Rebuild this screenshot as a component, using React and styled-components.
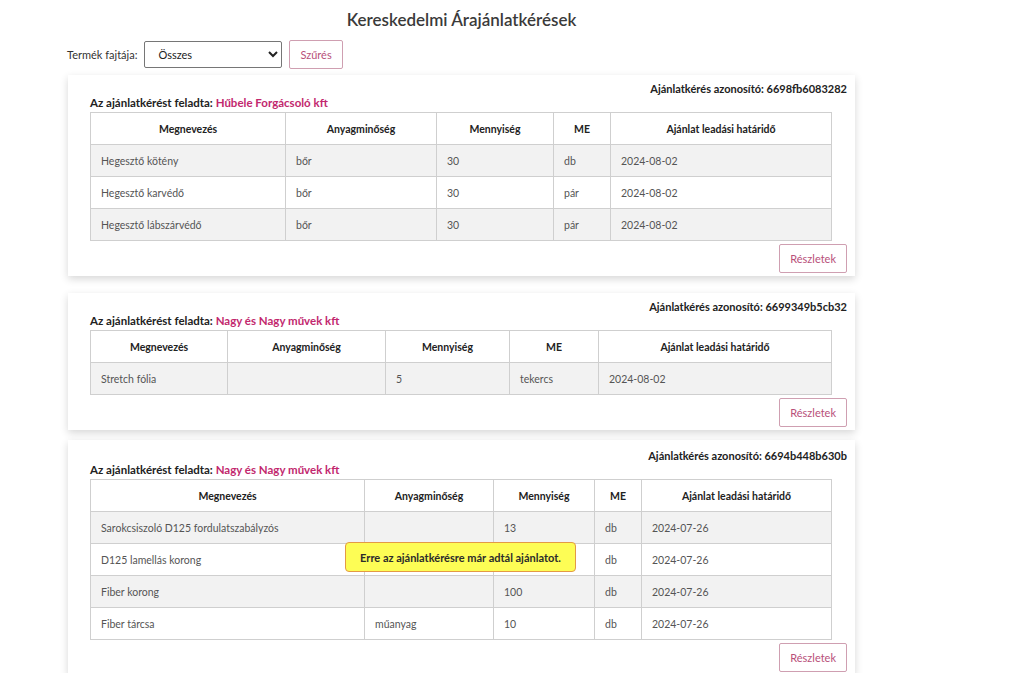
import React from "react";
import styled, { createGlobalStyle } from "styled-components";

const GlobalStyle = createGlobalStyle`
  body {
    margin: 0;
    background: #ffffff;
    font-family: Lato, "Open Sans", sans-serif;
    color: #444;
  }
`;

const Page = styled.div`
  width: 787px;
  margin-left: 68px;
  padding-top: 9px;
`;

const Title = styled.h1`
  margin: 0;
  text-align: center;
  font-size: 17px;
  font-weight: 600;
  color: #3a3a3a;
  line-height: 22px;
`;

const FilterRow = styled.div`
  display: flex;
  align-items: center;
  margin-top: 9px;
  margin-left: -1px;
  gap: 7px;
  font-size: 11px;
  color: #333;
`;

const Label = styled.label`
  margin-right: 0;
`;

const Select = styled.select`
  width: 138px;
  height: 27px;
  border: 1px solid #767676;
  border-radius: 2px;
  background: #fff;
  font-family: inherit;
  font-size: 11px;
  padding-left: 9px;
  color: #222;
`;

const OutlineButton = styled.button`
  height: ${(p) => p.$h || 29}px;
  padding: 0 ${(p) => p.$px || 10}px;
  background: #fff;
  border: 1px solid #cf9fb1;
  border-radius: 2px;
  color: #b8507a;
  font-family: inherit;
  font-size: 11px;
  cursor: pointer;
`;

const Card = styled.div`
  position: relative;
  margin-top: ${(p) => p.$mt}px;
  background: #fff;
  box-shadow: 0 3px 8px rgba(0, 0, 0, 0.16);
  padding: ${(p) => p.$pt || 7}px 8px 3px 8px;
`;

const RequestId = styled.div`
  text-align: right;
  font-size: 11px;
  font-weight: 700;
  color: #222;
  line-height: 14px;
`;

const Sender = styled.div`
  margin-left: 14px;
  font-size: 11.5px;
  font-weight: 700;
  color: #222;
  line-height: 14px;
  span {
    color: #c2286e;
  }
`;

const TableWrap = styled.div`
  position: relative;
  margin: 2px 16px 0 14px;
`;

const Table = styled.table`
  width: 741px;
  border-collapse: collapse;
  table-layout: fixed;
  font-size: 10.5px;
  th,
  td {
    border: 1px solid #cfcfcf;
    height: 31px;
    padding: 0 10px;
  }
  th {
    font-weight: 700;
    color: #222;
    text-align: center;
    background: #fff;
  }
  td {
    color: #555;
    text-align: left;
  }
  tbody tr:nth-child(odd) td {
    background: #f2f2f2;
  }
`;

const Footer = styled.div`
  display: flex;
  justify-content: flex-end;
  margin-top: 3px;
`;

const Tooltip = styled.div`
  position: absolute;
  left: 255px;
  top: 63px;
  width: 231px;
  height: 30px;
  box-sizing: border-box;
  display: flex;
  align-items: center;
  justify-content: center;
  background: #fdfd55;
  border: 1px solid #e39a45;
  border-radius: 4px;
  font-size: 11px;
  font-weight: 700;
  color: #2b2b2b;
`;

const headers = [
  "Megnevezés",
  "Anyagminőség",
  "Mennyiség",
  "ME",
  "Ajánlat leadási határidő",
];

const requests = [
  {
    id: "6698fb6083282",
    sender: "Hűbele Forgácsoló kft",
    mt: 6,
    cols: [195, 151, 117, 57, 221],
    rows: [
      ["Hegesztő kötény", "bőr", "30", "db", "2024-08-02"],
      ["Hegesztő karvédő", "bőr", "30", "pár", "2024-08-02"],
      ["Hegesztő lábszárvédő", "bőr", "30", "pár", "2024-08-02"],
    ],
  },
  {
    id: "6699349b5cb32",
    sender: "Nagy és Nagy művek kft",
    mt: 17,
    cols: [137, 158, 124, 89, 233],
    rows: [["Stretch fólia", "", "5", "tekercs", "2024-08-02"]],
  },
  {
    id: "6694b448b630b",
    sender: "Nagy és Nagy művek kft",
    mt: 10,
    pt: 9,
    cols: [274, 129, 101, 47, 190],
    tooltip: "Erre az ajánlatkérésre már adtál ajánlatot.",
    rows: [
      ["Sarokcsiszoló D125 fordulatszabályzós", "", "13", "db", "2024-07-26"],
      ["D125 lamellás korong", "", "", "db", "2024-07-26"],
      ["Fiber korong", "", "100", "db", "2024-07-26"],
      ["Fiber tárcsa", "műanyag", "10", "db", "2024-07-26"],
    ],
  },
];

function RequestCard({ req }) {
  return (
    <Card $mt={req.mt} $pt={req.pt}>
      <RequestId>Ajánlatkérés azonosító: {req.id}</RequestId>
      <Sender>
        Az ajánlatkérést feladta: <span>{req.sender}</span>
      </Sender>
      <TableWrap>
        <Table>
          <colgroup>
            {req.cols.map((w, i) => (
              <col key={i} style={{ width: w }} />
            ))}
          </colgroup>
          <thead>
            <tr>
              {headers.map((h) => (
                <th key={h}>{h}</th>
              ))}
            </tr>
          </thead>
          <tbody>
            {req.rows.map((r, i) => (
              <tr key={i}>
                {r.map((c, j) => (
                  <td key={j}>{c}</td>
                ))}
              </tr>
            ))}
          </tbody>
        </Table>
        {req.tooltip && <Tooltip>{req.tooltip}</Tooltip>}
      </TableWrap>
      <Footer>
        <OutlineButton $px={10}>Részletek</OutlineButton>
      </Footer>
    </Card>
  );
}

export default function App() {
  return (
    <>
      <GlobalStyle />
      <Page>
        <Title>Kereskedelmi Árajánlatkérések</Title>
        <FilterRow>
          <Label>Termék fajtája:</Label>
          <Select defaultValue="all">
            <option value="all">Összes</option>
          </Select>
          <OutlineButton $px={10}>Szűrés</OutlineButton>
        </FilterRow>
        {requests.map((r) => (
          <RequestCard key={r.id} req={r} />
        ))}
      </Page>
    </>
  );
}
